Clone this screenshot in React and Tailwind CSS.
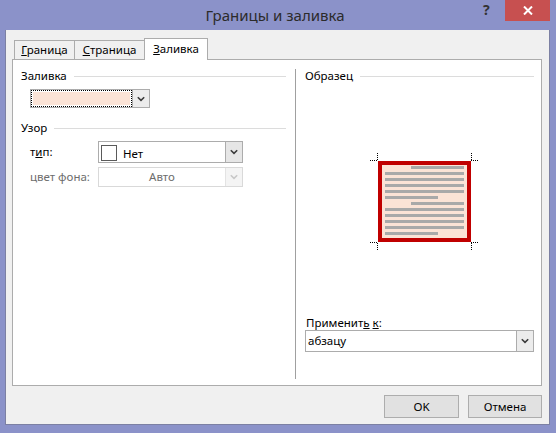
import React from "react";

const Chevron = ({ color = "#3c3c3c" }) => (
  <svg width="8" height="6" viewBox="0 0 8 6">
    <path d="M0.8 1.2 L4 4.4 L7.2 1.2" fill="none" stroke={color} strokeWidth="1.6" />
  </svg>
);

const Header = ({ children, lineClass = "" }) => (
  <div className="flex items-center h-[16px]">
    <span className="leading-[16px]">{children}</span>
    <div className={"flex-1 h-px bg-[#dcdcdc] ml-[7px] " + lineClass} />
  </div>
);

const Preview = () => {
  const lines = [];
  for (let i = 0; i < 12; i++) {
    const y = 15 + 6 * i;
    let x1 = 18, x2 = 97;
    if (i === 0 || i === 6) x1 = 44;
    if (i === 5 || i === 11) x2 = 71;
    lines.push(<rect key={i} x={x1} y={y} width={x2 - x1} height={3} fill="#a9a9a9" />);
  }
  const dot = { stroke: "#000", strokeWidth: 1, strokeDasharray: "1 1", fill: "none" };
  return (
    <svg width="114" height="102" viewBox="0 0 114 102" shapeRendering="crispEdges">
      <rect x="11" y="10" width="93" height="81" fill="#c00000" />
      <rect x="15" y="14" width="85" height="73" fill="#fbe3d6" />
      {lines}
      <path d="M3 9.5 H11 M10.5 2 V9" style={dot} />
      <path d="M104 9.5 H112 M104.5 2 V9" style={dot} />
      <path d="M3 91.5 H11 M10.5 92 V100" style={dot} />
      <path d="M104 91.5 H112 M104.5 92 V100" style={dot} />
    </svg>
  );
};

export default function App() {
  return (
    <div
      className="w-[556px] h-[433px] bg-[#8b92c9] flex flex-col text-[11.5px] text-black overflow-hidden"
      style={{ fontFamily: '"Noto Sans", "Open Sans", sans-serif' }}
    >
      {/* title bar */}
      <div className="h-[30px] flex items-start relative">
        <div className="flex-1 text-center text-[15px] leading-[30px] text-[#2b2b2b] pr-[6px]">Границы и заливка</div>
        <div className="absolute right-[6px] top-0 flex items-start">
          <div className="w-[20px] h-[21px] text-[14px] font-bold text-[#333] leading-[19px] mr-[2px]">?</div>
          <div className="w-[45px] h-[21px] bg-[#c75050] flex items-center justify-center">
            <svg width="10" height="9" viewBox="0 0 10 9">
              <path d="M1 0.5 L9 8.5 M9 0.5 L1 8.5" stroke="#fff" strokeWidth="2" />
            </svg>
          </div>
        </div>
      </div>

      {/* client */}
      <div className="ml-[5px] mr-[6px] h-[395px] bg-[#f0f0f0] border-l border-r border-b border-[#7c80a3] flex flex-col pt-[8px] pl-[6px] pr-[7px]">
        {/* tabs */}
        <div className="flex items-end ml-[2px] -mb-px relative z-10 h-[22px]">
          <div className="w-[61px] h-[20px] border border-[#acacac] bg-[#f0f0f0] flex items-center justify-center leading-[16px]">
            <span><u>Г</u>раница</span>
          </div>
          <div className="w-[71px] h-[20px] -ml-px border border-[#acacac] bg-[#f0f0f0] flex items-center justify-center leading-[16px]">
            <span><u>С</u>траница</span>
          </div>
          <div className="w-[64px] h-[22px] -ml-px border border-b-0 border-[#acacac] bg-white flex items-center justify-center leading-[16px] pb-[1px]">
            <span><u>З</u>аливка</span>
          </div>
        </div>

        {/* panel */}
        <div className="h-[327px] border border-[#acacac] bg-white flex">
          {/* left */}
          <div className="w-[282px] pl-[8px] pr-[9px] flex flex-col">
            <div className="mt-[8px]">
              <Header>Заливка</Header>
            </div>
            <div className="ml-[9px] mt-[5px] w-[120px] h-[19px] border border-[#acacac] flex">
              <div className="flex-1 border border-dotted border-black p-px">
                <div className="w-full h-full bg-[#fbe3d6]" />
              </div>
              <div className="w-[17px] border-l border-[#acacac] bg-[#ececec] flex items-center justify-center">
                <Chevron />
              </div>
            </div>
            <div className="mt-[12px]">
              <Header>Узор</Header>
            </div>
            <div className="mt-[5px] flex items-center">
              <div className="w-[77px] pl-[9px] leading-[16px] whitespace-nowrap">т<u>и</u>п:</div>
              <div className="w-[145px] h-[22px] border border-[#acacac] bg-white flex">
                <div className="flex-1 flex items-center pl-[2px]">
                  <div className="w-[16px] h-[16px] border border-[#5a5a5a] mt-[1px]" />
                  <span className="ml-[6px] mt-[3px] leading-[16px]">Нет</span>
                </div>
                <div className="w-[17px] border-l border-[#acacac] bg-[#e6e6e6] flex items-center justify-center">
                  <Chevron />
                </div>
              </div>
            </div>
            <div className="mt-[4px] flex items-center">
              <div className="w-[77px] pl-[9px] leading-[16px] text-[#6d6d6d] whitespace-nowrap">цвет фона:</div>
              <div className="w-[145px] h-[20px] border border-[#d9d9d9] bg-white flex">
                <div className="flex-1 flex items-center justify-center leading-[16px] text-[#6d6d6d]">Авто</div>
                <div className="w-[17px] border-l border-[#e3e3e3] bg-[#f4f4f4] flex items-center justify-center">
                  <Chevron color="#c8c8c8" />
                </div>
              </div>
            </div>
          </div>

          {/* divider */}
          <div className="w-px bg-[#a0a0a0] mt-[9px] mb-[6px]" />

          {/* right */}
          <div className="flex-1 pl-[9px] pr-[7px] flex flex-col">
            <div className="mt-[8px]">
              <Header>Образец</Header>
            </div>
            <div className="mt-[67px] ml-[62px]">
              <Preview />
            </div>
            <div className="flex-1" />
            <div className="pl-[1px] leading-[15px]">Применит<u>ь</u> <u>к</u>:</div>
            <div className="mb-[33px] h-[22px] border border-[#acacac] bg-white flex">
              <div className="flex-1 flex items-center pl-[2px] leading-[16px]">абзацу</div>
              <div className="w-[17px] border-l border-[#acacac] bg-[#ececec] flex items-center justify-center">
                <Chevron />
              </div>
            </div>
          </div>
        </div>

        {/* buttons */}
        <div className="flex justify-end gap-[9px] mt-[9px]">
          <div className="w-[75px] h-[23px] border border-[#adadad] bg-[#e1e1e1] flex items-center justify-center leading-[16px]">OK</div>
          <div className="w-[74px] h-[23px] border border-[#adadad] bg-[#e1e1e1] flex items-center justify-center leading-[16px]">Отмена</div>
        </div>
      </div>
    </div>
  );
}
